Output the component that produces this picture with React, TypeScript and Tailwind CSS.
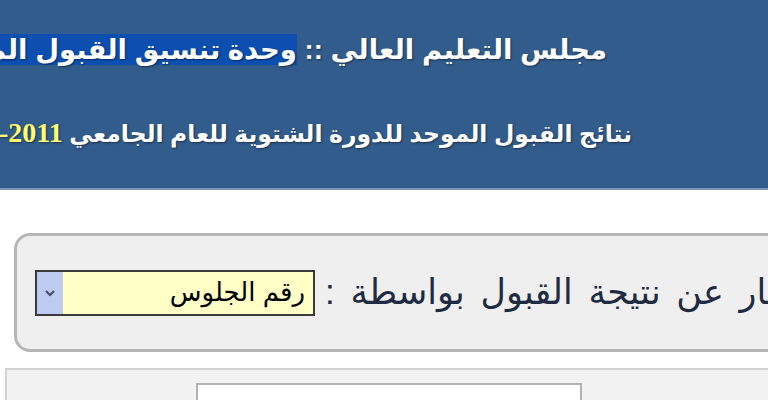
import React from "react";

export default function App() {
  const arabic = "font-['Liberation_Sans','DejaVu_Sans',sans-serif]";
  return (
    <div className="w-[768px] h-[400px] overflow-hidden bg-white flex flex-col">
      <div className="h-[190px] shrink-0 bg-[#325c8b] border-b-2 border-[#7b98bd] overflow-hidden">
        <div dir="rtl" className={`pr-[161px] flex flex-col text-white font-bold ${arabic} [text-shadow:1px_1px_2px_rgba(0,0,0,0.45)]`}>
          <div className="mt-[30px] h-[40px] leading-[40px] text-[27.5px] whitespace-nowrap">
            مجلس التعليم العالي :: <span className="bg-[#0c4fb0]">وحدة تنسيق القبول الموحد</span>
          </div>
          <div className="mt-[43px] h-[40px] leading-[40px] text-[23.5px] whitespace-nowrap mr-[-25px]">
            نتائج القبول الموحد للدورة الشتوية للعام الجامعي{" "}
            <span className="font-['Liberation_Serif',serif] text-[28px] text-[#ffff70]">2011-2012</span>
          </div>
        </div>
      </div>

      <div className="mt-[43px] ml-[14px] w-[900px] h-[119px] shrink-0 border-[3px] border-[#b6b6b6] rounded-[16px] bg-[#efefef] flex items-center pl-[18px]">
        <div className="w-[280px] h-[46px] shrink-0 border-2 border-[#3a3a3a] bg-[#ffffc6] flex items-stretch">
          <div className="w-[26px] bg-[#bccbf0] flex items-center justify-center">
            <svg width="12" height="8" viewBox="0 0 12 8">
              <path d="M2 2 L6 6 L10 2" stroke="#44506a" strokeWidth="2.2" fill="none" />
            </svg>
          </div>
          <div dir="rtl" className={`flex-1 pr-[8px] flex items-center text-[26px] text-black ${arabic}`}>
            رقم الجلوس
          </div>
        </div>
        <div dir="rtl" className={`ml-[10px] text-[35px] [word-spacing:6px] text-[#1e2b40] whitespace-nowrap ${arabic}`}>
          الاستفسار عن نتيجة القبول بواسطة :
        </div>
      </div>

      <div className="mt-[16px] ml-[5px] flex-1 border-t-2 border-l-2 border-[#d2d2d2] bg-[#f2f2f2] pl-[189px] pt-[13px]">
        <div className="w-[386px] h-[40px] border-2 border-[#b2b2b2] bg-white" />
      </div>
    </div>
  );
}
